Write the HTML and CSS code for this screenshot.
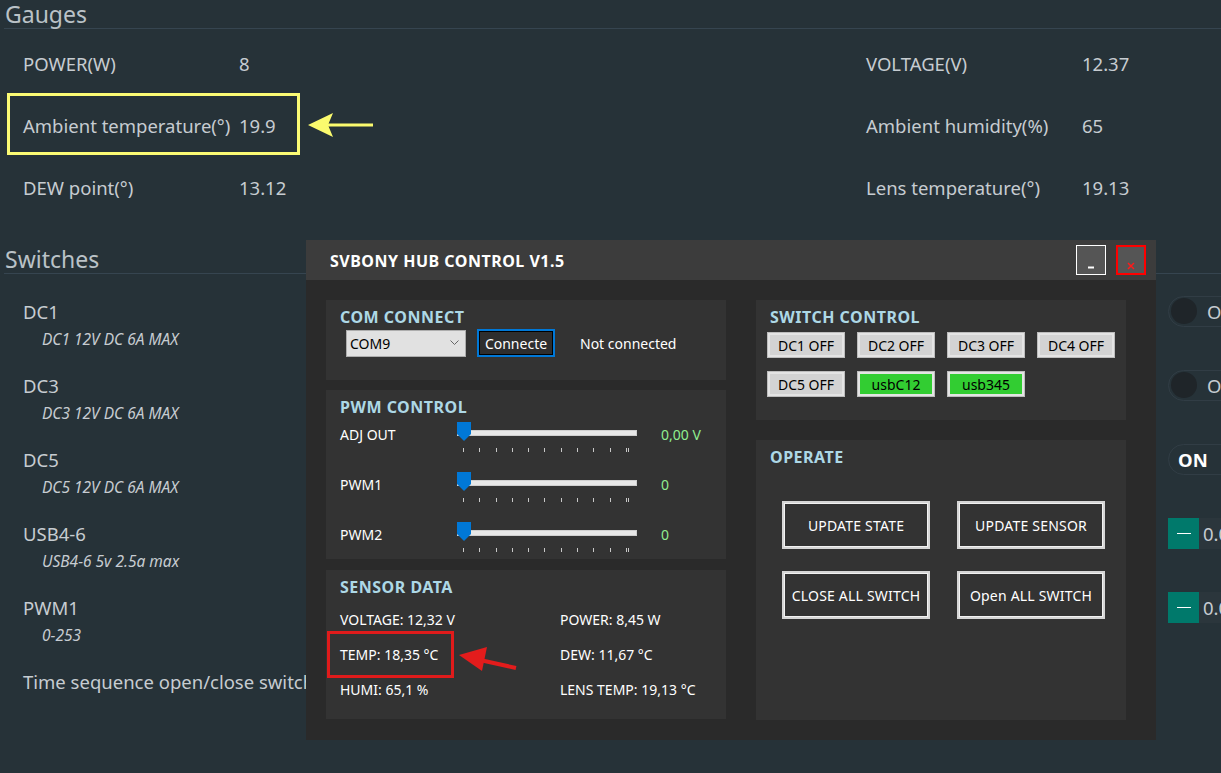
FILE: index.html
```html
<!DOCTYPE html>
<html lang="en">
<head>
	<meta charset="UTF-8">
	<title>SVBONY HUB</title>
	<link rel="stylesheet" href="styles.css">
</head>
<body>
	<h2 class="sec-title">Gauges</h2>
	<div class="gauges">
		<div>POWER(W)</div><div>8</div><div>VOLTAGE(V)</div><div>12.37</div>
		<div>Ambient temperature(°)</div><div>19.9</div><div>Ambient humidity(%)</div><div>65</div>
		<div>DEW point(°)</div><div>13.12</div><div>Lens temperature(°)</div><div>19.13</div>
	</div>

	<h2 class="sec-title sw-title">Switches</h2>
	<div class="switch-list">
		<div class="sw-item">
			<div class="sw-row"><div class="sw-name">DC1</div><div class="toggle"><span class="knob"></span>OFF</div></div>
			<div class="sw-desc">DC1 12V DC 6A MAX</div>
		</div>
		<div class="sw-item">
			<div class="sw-row"><div class="sw-name">DC3</div><div class="toggle"><span class="knob"></span>OFF</div></div>
			<div class="sw-desc">DC3 12V DC 6A MAX</div>
		</div>
		<div class="sw-item">
			<div class="sw-row"><div class="sw-name">DC5</div><div class="toggle toggle-on">ON<span class="knob knob-on"></span></div></div>
			<div class="sw-desc">DC5 12V DC 6A MAX</div>
		</div>
		<div class="sw-item">
			<div class="sw-row"><div class="sw-name">USB4-6</div><div class="num"><span class="minus"></span><span class="num-val">0.00</span></div></div>
			<div class="sw-desc">USB4-6 5v 2.5a max</div>
		</div>
		<div class="sw-item">
			<div class="sw-row"><div class="sw-name">PWM1</div><div class="num"><span class="minus"></span><span class="num-val">0.00</span></div></div>
			<div class="sw-desc">0-253</div>
		</div>
		<div class="sw-row"><div class="sw-name">Time sequence open/close switch</div></div>
	</div>

	<!-- note marks over the screenshot -->
	<div class="mark-yellow"></div>
	<svg class="arrow-yellow" width="70" height="28" viewBox="0 0 70 28">
		<line x1="67" y1="13" x2="20" y2="13" stroke="#fbfb6e" stroke-width="3"/>
		<polygon points="2,13 27,1 22,13 27,25" fill="#fbfb6e"/>
	</svg>

	<div class="dialog">
		<div class="dlg-head">
			<div class="dlg-title">SVBONY HUB CONTROL V1.5</div>
			<div class="win-btn btn-min">
				<svg width="28" height="28"><line x1="11" y1="21.5" x2="17" y2="21.5" stroke="#fff" stroke-width="2"/></svg>
			</div>
			<div class="win-btn btn-close">
				<svg width="26" height="26"><path d="M10 16 L16 22 M16 16 L10 22" stroke="#ff1a1a" stroke-width="1.5"/></svg>
			</div>
		</div>
		<div class="dlg-body">
			<div class="col-left">
				<div class="panel p-com">
					<div class="panel-title">COM CONNECT</div>
					<div class="com-row">
						<div class="combo">COM9
							<svg width="9" height="6"><path d="M0.5 0.5 L4.5 4.5 L8.5 0.5" stroke="#666" fill="none"/></svg>
						</div>
						<button class="btn-connect">Connecte</button>
						<span class="conn-state">Not connected</span>
					</div>
				</div>

				<div class="panel p-pwm">
					<div class="panel-title">PWM CONTROL</div>
					<div class="pwm-row first">
						<div class="pwm-label">ADJ OUT</div>
						<div class="slider"><div class="track"></div><svg class="thumb" width="14" height="19"><polygon points="0,0 14,0 14,12 7,19 0,12" fill="#0078d7"/></svg><div class="ticks"><i></i><i></i><i></i><i></i><i></i><i></i><i></i><i></i><i></i><i></i><i class="dbl"></i></div></div>
						<div class="pwm-val">0,00 V</div>
					</div>
					<div class="pwm-row">
						<div class="pwm-label">PWM1</div>
						<div class="slider"><div class="track"></div><svg class="thumb" width="14" height="19"><polygon points="0,0 14,0 14,12 7,19 0,12" fill="#0078d7"/></svg><div class="ticks"><i></i><i></i><i></i><i></i><i></i><i></i><i></i><i></i><i></i><i></i><i class="dbl"></i></div></div>
						<div class="pwm-val">0</div>
					</div>
					<div class="pwm-row">
						<div class="pwm-label">PWM2</div>
						<div class="slider"><div class="track"></div><svg class="thumb" width="14" height="19"><polygon points="0,0 14,0 14,12 7,19 0,12" fill="#0078d7"/></svg><div class="ticks"><i></i><i></i><i></i><i></i><i></i><i></i><i></i><i></i><i></i><i></i><i class="dbl"></i></div></div>
						<div class="pwm-val">0</div>
					</div>
				</div>

				<div class="panel p-sensor">
					<div class="panel-title">SENSOR DATA</div>
					<div class="sensor-grid">
						<div>VOLTAGE: 12,32 V</div><div>POWER: 8,45 W</div>
						<div>TEMP: 18,35 °C</div><div>DEW: 11,67 °C</div>
						<div>HUMI: 65,1 %</div><div>LENS TEMP: 19,13 °C</div>
					</div>
				</div>
			</div>

			<div class="col-right">
				<div class="panel p-switch">
					<div class="panel-title">SWITCH CONTROL</div>
					<div class="sw-grid">
						<button class="sw-btn">DC1 OFF</button>
						<button class="sw-btn">DC2 OFF</button>
						<button class="sw-btn">DC3 OFF</button>
						<button class="sw-btn">DC4 OFF</button>
						<button class="sw-btn">DC5 OFF</button>
						<button class="sw-btn on">usbC12</button>
						<button class="sw-btn on">usb345</button>
					</div>
				</div>
				<div class="panel p-operate">
					<div class="panel-title">OPERATE</div>
					<div class="op-grid">
						<button class="op-btn">UPDATE STATE</button>
						<button class="op-btn">UPDATE SENSOR</button>
						<button class="op-btn">CLOSE ALL SWITCH</button>
						<button class="op-btn">Open ALL SWITCH</button>
					</div>
				</div>
			</div>
		</div>
	</div>

	<div class="mark-red"></div>
	<svg class="arrow-red" width="65" height="36" viewBox="0 0 65 36">
		<line x1="24" y1="20" x2="60" y2="28" stroke="#e31c1c" stroke-width="4"/>
		<polygon points="3,15 31,7 26,31" fill="#e31c1c"/>
	</svg>
</body>
</html>
```

FILE: styles.css
```css
*{
	margin: 0;
	padding: 0;
	box-sizing: border-box;
}
body{
	position: relative;
	width: 1221px;
	height: 773px;
	overflow: hidden;
	background: #263238;
	color: #c6ccd1;
	font-family: "Noto Sans", "Open Sans", sans-serif;
}
.sec-title{
	margin-left: 4px;
	padding-left: 1px;
	height: 29px;
	line-height: 28px;
	font-size: 23px;
	font-weight: normal;
	color: #bac2c7;
	border-bottom: 1px solid #364550;
}
.gauges{
	display: grid;
	grid-template-columns: 216px 627px 216px 1fr;
	grid-auto-rows: 62px;
	align-items: center;
	margin-top: 3px;
	padding-left: 23px;
	font-size: 18.5px;
}
.sw-title{
	margin-top: 27px;
}
.switch-list{
	padding: 24px 0 0 23px;
}
.sw-item{
	margin-bottom: 22px;
}
.sw-row{
	display: flex;
	align-items: center;
	height: 26px;
}
.sw-name{
	flex: 0 0 1145px;
	font-size: 18.5px;
	white-space: nowrap;
}
.sw-desc{
	margin-top: 4px;
	padding-left: 19px;
	line-height: 22px;
	font-size: 15.5px;
	font-style: italic;
}
.toggle{
	flex-shrink: 0;
	display: flex;
	align-items: center;
	gap: 10px;
	width: 90px;
	height: 31px;
	margin: -3px 0;
	padding-left: 2px;
	border: 1px solid #313d45;
	border-radius: 16px;
	font-size: 18.5px;
}
.knob{
	width: 26px;
	height: 26px;
	border-radius: 50%;
	background: #1f2529;
}
.toggle-on{
	padding-left: 9px;
	color: #fff;
	font-weight: bold;
	gap: 14px;
}
.num{
	flex-shrink: 0;
	display: flex;
	height: 31px;
	margin: -3px 0;
}
.minus{
	position: relative;
	width: 31px;
	height: 31px;
	background: #00796b;
}
.minus::after{
	content: "";
	position: absolute;
	left: 9px;
	top: 15px;
	width: 14px;
	height: 1px;
	background: #fff;
}
.num-val{
	width: 80px;
	padding-left: 4px;
	line-height: 31px;
	font-size: 18.5px;
	background: #2b363c;
}

/* annotations */
.mark-yellow{
	position: absolute;
	left: 7px;
	top: 93px;
	width: 293px;
	height: 62px;
	border: 3px solid #fbfb74;
}
.arrow-yellow{
	position: absolute;
	left: 306px;
	top: 112px;
}
.mark-red{
	position: absolute;
	left: 327px;
	top: 631px;
	width: 127px;
	height: 47px;
	border: 3px solid #e01b1b;
}
.arrow-red{
	position: absolute;
	left: 456px;
	top: 640px;
}

/* dialog */
.dialog{
	position: absolute;
	left: 306px;
	top: 240px;
	width: 850px;
	height: 500px;
	background: #2a2a2a;
	color: #fff;
	font-size: 14px;
}
.dlg-head{
	display: flex;
	align-items: flex-start;
	height: 40px;
	padding-left: 24px;
	background: #3c3c3c;
}
.dlg-title{
	flex: 1;
	margin-top: 10px;
	font-size: 16px;
	font-weight: bold;
	letter-spacing: 0.5px;
	line-height: 22px;
}
.win-btn{
	margin-top: 5px;
	width: 30px;
	height: 30px;
	background: #555;
}
.btn-min{
	border: 1px solid #fff;
	margin-right: 10px;
}
.btn-close{
	border: 2px solid #ff0000;
	margin-right: 10px;
}
.win-btn svg{
	display: block;
}
.dlg-body{
	display: flex;
	gap: 30px;
	padding: 20px 0 0 20px;
}
.col-left{
	width: 400px;
}
.col-right{
	width: 370px;
}
.panel{
	background: #333;
	padding: 7px 14px 0;
}
.panel-title{
	line-height: 20px;
	font-size: 16px;
	font-weight: bold;
	letter-spacing: 0.5px;
	color: #add8e6;
}
.p-com{
	height: 80px;
	margin-bottom: 10px;
}
.p-pwm{
	height: 169px;
	margin-bottom: 11px;
}
.p-sensor{
	height: 149px;
}
.p-switch{
	height: 120px;
	margin-bottom: 20px;
}
.p-operate{
	height: 280px;
}
.com-row{
	display: flex;
	align-items: center;
	height: 28px;
	margin-top: 2px;
	padding-left: 6px;
}
.combo{
	display: flex;
	align-items: center;
	justify-content: space-between;
	width: 120px;
	height: 27px;
	padding: 0 6px 0 3px;
	background: #e1e1e1;
	border: 1px solid #adadad;
	color: #000;
}
.btn-connect{
	margin-left: 11px;
	width: 78px;
	height: 28px;
	border: 2px solid #0078d7;
	box-shadow: inset 0 0 0 1px #000;
	background: #2e2e2e;
	color: #fff;
	font-family: inherit;
	font-size: 14px;
}
.conn-state{
	margin-left: 25px;
}
.pwm-row{
	display: flex;
	height: 50px;
}
.pwm-row.first{
	margin-top: 5px;
}
.pwm-label{
	width: 117px;
	margin-top: 3px;
	line-height: 20px;
}
.slider{
	position: relative;
	width: 180px;
	height: 30px;
}
.track{
	position: absolute;
	left: 0;
	top: 8px;
	width: 180px;
	height: 6px;
	background: #e7e7e7;
	border: 1px solid #cfcfcf;
}
.thumb{
	position: absolute;
	left: 0;
	top: 0;
}
.ticks{
	position: absolute;
	left: 6px;
	top: 26px;
	width: 166px;
	display: flex;
	justify-content: space-between;
}
.ticks i{
	width: 1px;
	height: 4px;
	background: #c8c8c8;
}
.ticks i.dbl{
	width: 3px;
	background: none;
	border-left: 1px solid #c8c8c8;
	border-right: 1px solid #c8c8c8;
}
.pwm-val{
	margin: 3px 0 0 24px;
	line-height: 20px;
	color: #90ee90;
}
.sensor-grid{
	display: grid;
	grid-template-columns: 220px 1fr;
	grid-auto-rows: 35px;
	align-items: center;
	margin-top: 5px;
}
.sw-grid{
	display: grid;
	grid-template-columns: repeat(4, 78px);
	gap: 13px 12px;
	margin: 5px 0 0 -3px;
}
.sw-btn{
	height: 26px;
	background: #d3d3d3;
	border: 1px solid #bdbdbd;
	box-shadow: inset 0 0 0 2px #e4e4e4;
	color: #000;
	font-family: inherit;
	font-size: 14px;
}
.sw-btn.on{
	background: #32cd32;
}
.op-grid{
	display: grid;
	grid-template-columns: 148px 148px;
	gap: 22px 27px;
	margin: 34px 0 0 12px;
}
.op-btn{
	height: 48px;
	background: #333;
	border: 2px solid #d6d6d6;
	box-shadow: inset 0 0 0 1px #f2f2f2;
	color: #fff;
	font-family: inherit;
	font-size: 14px;
	letter-spacing: 0.2px;
}
```
